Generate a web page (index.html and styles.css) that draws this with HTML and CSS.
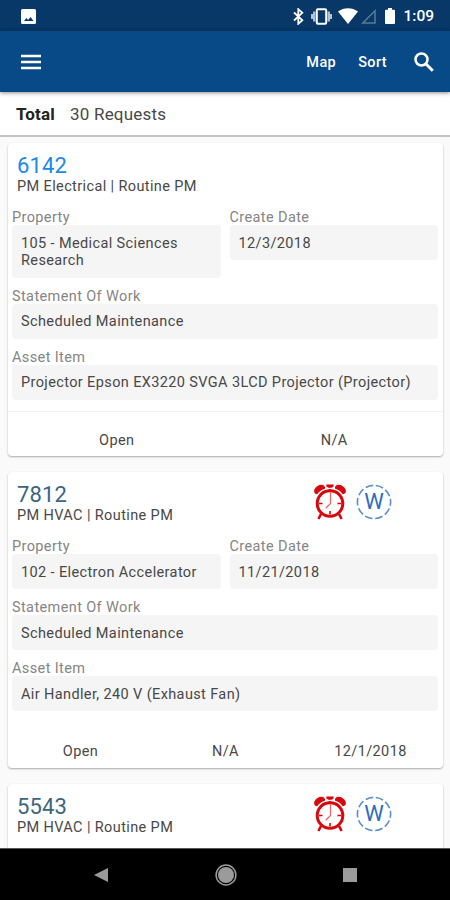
FILE: index.html
```html
<!DOCTYPE html>
<html>
<head>
<meta charset="utf-8" />
<title>Requests</title>
<link rel="stylesheet" href="styles.css">
</head>
<body>
<svg class="defs" width="0" height="0">
<symbol id="alarm" viewBox="0 0 34 38">
<g fill="#d9060b">
<ellipse cx="6.6" cy="6.6" rx="6" ry="4.2" transform="rotate(-35 6.6 6.6)" />
<ellipse cx="27.4" cy="6.6" rx="6" ry="4.2" transform="rotate(35 27.4 6.6)" />
<path d="M13.4 1.4h7.2v2.2l-2.4 1.4v3h-2.4V5l-2.4-1.4z" />
</g>
<g fill="none" stroke="#d9060b">
<circle cx="17" cy="20.5" r="15" stroke="#fff" stroke-width="1.6" />
<circle cx="17" cy="20.5" r="12.8" stroke-width="3" fill="#fff" />
<path d="M8 31l-2.6 5M26 31l2.6 5" stroke-width="2.6" />
<path d="M6 20.5h3.6M24.4 20.5H28M17 28v3.6" stroke-width="1.6" />
<path d="M17.5 9.5v11l-4.800 4.800" stroke-width="1.300" stroke="#e8686b" />
</g>
</symbol>
</svg>

<div class="status">
<svg class="photo" width="15" height="15" viewBox="0 0 15 15"><rect width="15" height="15" rx="1.5" fill="#fff" /><path d="M3 12l2.4-3 1.7 1.9L9.6 8l2.9 4z" fill="#083867" /></svg>
<svg class="bt" width="11" height="17" viewBox="0 0 11 17"><path d="M1 4.5l8.3 7.7-4 3.6V1.2l4 3.6L1 12.5" fill="none" stroke="#fff" stroke-width="1.8" /></svg>
<svg class="vibrate" width="21" height="17" viewBox="0 0 21 17"><rect x="5.8" y="1.3" width="9.4" height="14.4" rx="1" fill="none" stroke="#fff" stroke-width="2" /><path d="M3.3 3.5v10M17.7 3.500v10M1.200 6v5M19.800 6v5" stroke="#b3c3d4" stroke-width="2.400" /></svg>
<svg class="wifi" width="20" height="16" viewBox="0 0 20 16"><path d="M0 3.6C5.5-.9 14.5-.9 20 3.6L10 16z" fill="#fff" /></svg>
<svg class="signal" width="15" height="15" viewBox="0 0 15 15"><path d="M14 1.8V14H1.8z" fill="none" stroke="#5a7a9a" stroke-width="1.5" /></svg>
<svg class="battery" width="10" height="16" viewBox="0 0 10 16"><path d="M1 1.8h2V0h4v1.8h2a1 1 0 0 1 1 1V15a1 1 0 0 1-1 1H1a1 1 0 0 1-1-1V2.8a1 1 0 0 1 1-1z" fill="#fff" /></svg>
<span class="clock">1:09</span>
</div>

<div class="toolbar">
<a class="menu" href="#"><svg width="20" height="16" viewBox="0 0 20 16"><path d="M0 2h20M0 8h20M0 14h20" stroke="#fff" stroke-width="2.7" /></svg></a>
<a class="action" href="#">Map</a>
<a class="action sort" href="#">Sort</a>
<a class="search" href="#"><svg width="20" height="20" viewBox="0 0 20 20"><circle cx="7.5" cy="7.5" r="6" fill="none" stroke="#fff" stroke-width="2.5" /><path d="M11.8 11.8l7 7" stroke="#fff" stroke-width="2.9" /></svg></a>
</div>

<div class="total"><b>Total</b><span>30 Requests</span></div>

<div class="list">
<div class="card">
<div class="head">
<div class="title">
<h2 class="unread">6142</h2>
<p>PM Electrical | Routine PM</p>
</div>
</div>
<div class="fields">
<div class="pair">
<div class="field"><label>Property</label><div class="value">105 - Medical Sciences Research</div></div>
<div class="field"><label>Create Date</label><div class="value">12/3/2018</div></div>
</div>
<div class="field"><label>Statement Of Work</label><div class="value">Scheduled Maintenance</div></div>
<div class="field"><label>Asset Item</label><div class="value">Projector Epson EX3220 SVGA 3LCD Projector (Projector)</div></div>
</div>
<div class="foot line"><span>Open</span><span>N/A</span></div>
</div>

<div class="card">
<div class="head">
<div class="title">
<h2>7812</h2>
<p>PM HVAC | Routine PM</p>
</div>
<svg class="alarm"><use href="#alarm" /></svg>
<svg class="warranty" viewBox="0 0 36 36"><circle cx="18" cy="18" r="16.6" /><text x="18" y="25.3">W</text></svg>
</div>
<div class="fields">
<div class="pair">
<div class="field"><label>Property</label><div class="value">102 - Electron Accelerator</div></div>
<div class="field"><label>Create Date</label><div class="value">11/21/2018</div></div>
</div>
<div class="field"><label>Statement Of Work</label><div class="value">Scheduled Maintenance</div></div>
<div class="field"><label>Asset Item</label><div class="value">Air Handler, 240 V (Exhaust Fan)</div></div>
</div>
<div class="foot"><span>Open</span><span>N/A</span><span>12/1/2018</span></div>
</div>

<div class="card last">
<div class="head">
<div class="title">
<h2>5543</h2>
<p>PM HVAC | Routine PM</p>
</div>
<svg class="alarm"><use href="#alarm" /></svg>
<svg class="warranty" viewBox="0 0 36 36"><circle cx="18" cy="18" r="16.6" /><text x="18" y="25.3">W</text></svg>
</div>
</div>
</div>

<div class="nav">
<svg width="14" height="14" viewBox="0 0 14 14"><path d="M14 0v14L0 7z" fill="#9b9b9b" /></svg>
<svg width="22" height="22" viewBox="0 0 22 22"><circle cx="11" cy="11" r="9.9" fill="none" stroke="#9b9b9b" stroke-width="1.5" /><circle cx="11" cy="11" r="8" fill="#9b9b9b" /></svg>
<svg width="14" height="14" viewBox="0 0 14 14"><rect width="14" height="14" fill="#9b9b9b" /></svg>
</div>
</body>
</html>
```
FILE: styles.css
```css
* {
  box-sizing: border-box;
  margin: 0;
  padding: 0;
}
body {
  background-color: #fafafa;
  color: #484848;
  display: flex;
  flex-direction: column;
  font-family: Roboto, Arial, sans-serif;
  font-size: 14.5px;
  height: 900px;
  letter-spacing: .38px;
  overflow: hidden;
  width: 450px;
}
svg {
  display: block;
  flex: none;
}
a {
  color: #fff;
  text-decoration: none;
}
.defs {
  position: absolute;
}
.status {
  align-items: center;
  background-color: #083867;
  color: #fff;
  display: flex;
  flex: none;
  height: 31px;
  padding: 1px 16px 0 21px;
}
.status > .bt {
  margin-left: auto;
  margin-right: 7px;
}
.status > .vibrate {
  margin-right: 6px;
}
.status > .wifi {
  margin-right: 3px;
}
.status > .signal {
  margin-right: 9px;
}
.status > .battery {
  margin-right: 8px;
}
.clock {
  font-size: 15.5px;
  font-weight: 500;
  letter-spacing: 0;
}
.toolbar {
  align-items: center;
  background-color: #084a88;
  box-shadow: 0 1px 4px rgba(0,0,0,.45);
  display: flex;
  flex: none;
  height: 61px;
  padding: 0 16px 0 21px;
  position: relative;
}
.action {
  font-weight: 500;
  margin-left: auto;
  padding-top: 2px;
}
.sort {
  margin: 0 27px 0 22px;
}
.total {
  align-items: center;
  background-color: #fff;
  border-bottom: 2px solid #c4c4c4;
  display: flex;
  flex: none;
  font-size: 17px;
  height: 45px;
  letter-spacing: .2px;
  padding: 1px 0 0 16px;
}
.total > b {
  color: #222;
  margin-right: 15px;
}
.list {
  display: flex;
  flex: 1;
  flex-direction: column;
  gap: 16px;
  min-height: 0;
  overflow: hidden;
  padding: 6px 7px 0 8px;
}
.card {
  background-color: #fff;
  border-radius: 4px;
  box-shadow: 0 1px 2px rgba(0,0,0,.32);
  flex: none;
}
.card.last {
  height: 120px;
}
.head {
  display: flex;
  height: 66px;
  padding: 10px 51px 0 9px;
}
.title {
  flex: 1;
}
h2 {
  color: #3c6580;
  font-size: 22px;
  font-weight: 400;
  letter-spacing: .1px;
  line-height: 25px;
}
h2.unread {
  color: #2089e5;
}
.title > p {
  line-height: 17px;
}
.alarm {
  height: 38px;
  margin-right: 9px;
  margin-top: 1px;
  width: 34px;
}
.warranty {
  height: 36px;
  margin-top: 2px;
  width: 36px;
}
.warranty > circle {
  fill: none;
  stroke: #5b8dcb;
  stroke-dasharray: 7.6 2.83;
  stroke-dashoffset: 3.8;
  stroke-width: 1.6;
}
.warranty > text {
  fill: #2c6dba;
  font-size: 22px;
  letter-spacing: 0;
  text-anchor: middle;
}
.fields {
  display: flex;
  flex-direction: column;
  gap: 10px;
  padding: 0 5px 0 4px;
}
.pair {
  align-items: flex-start;
  display: grid;
  gap: 9px;
  grid-template-columns: 1fr 1fr;
}
label {
  color: #858585;
  display: block;
  line-height: 16px;
  margin-bottom: -1px;
  padding-top: 1px;
}
.value {
  background-color: #f5f5f5;
  border-radius: 4px;
  line-height: 17.5px;
  padding: 9.5px 8px 8px 9px;
}
.foot {
  align-items: center;
  display: flex;
  height: 45px;
  margin-top: 11.5px;
  padding-top: 12px;
}
.foot.line {
  border-top: 1px solid #f3f3f3;
}
.foot > span {
  flex: 1;
  text-align: center;
}
.nav {
  align-items: center;
  background-color: #000;
  border-top: 1px solid #555;
  display: flex;
  flex: none;
  height: 52px;
  justify-content: space-between;
  padding: 0 93px 0 94px;
}
```
